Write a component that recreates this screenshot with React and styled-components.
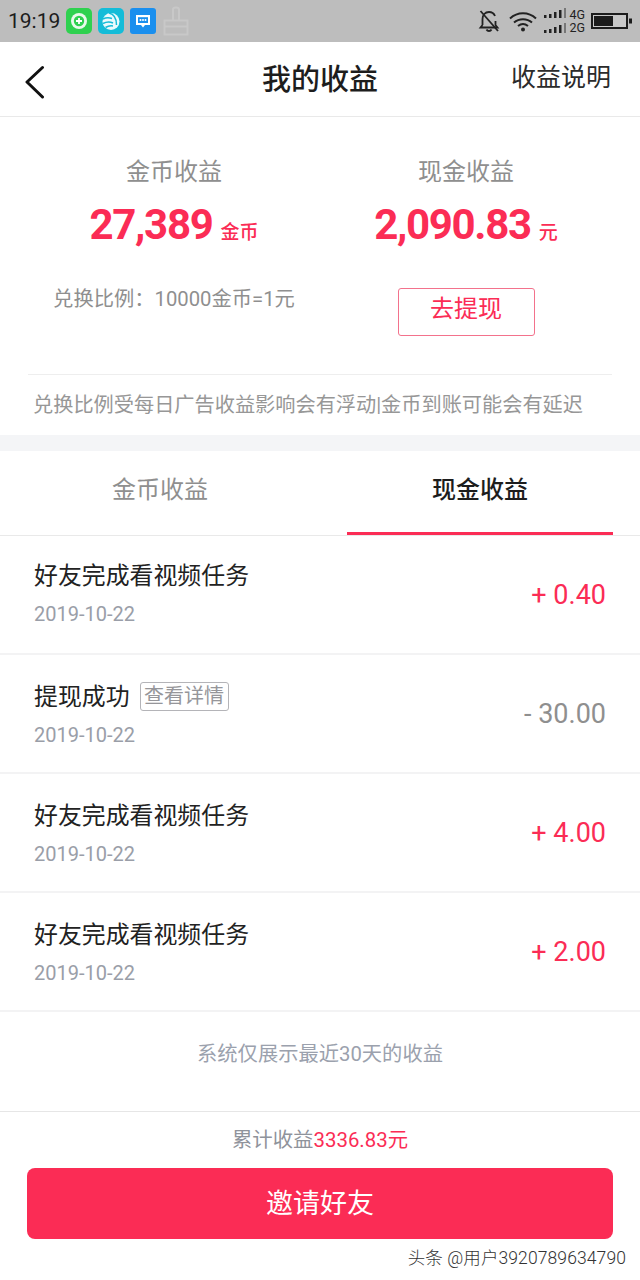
import React from "react";
import styled, { createGlobalStyle } from "styled-components";

const FONT = `Roboto, "Noto Sans CJK SC", sans-serif`;
const RED = "#fb2c55";

const Global = createGlobalStyle`
  html, body { margin: 0; padding: 0; background: #fff; }
  * { box-sizing: border-box; }
  body { font-family: ${FONT}; }
`;

const Page = styled.div`
  position: relative;
  width: 640px;
  height: 1280px;
  overflow: hidden;
  background: #fff;
`;

const StatusBar = styled.div`
  height: 42px;
  background: #bdbdbd;
  display: flex;
  align-items: center;
  padding: 0 8px 0 8px;
  color: #1c1c1c;
`;
const Time = styled.span`
  font-size: 21px;
  line-height: 42px;
  width: 58px;
  flex: none;
`;
const AppIcons = styled.div`
  display: flex;
  align-items: center;
  gap: 6px;
  flex: 1;
`;
const StatusRight = styled.div`
  display: flex;
  align-items: center;
`;
const NetLabels = styled.div`
  display: flex;
  flex-direction: column;
  font-size: 12.5px;
  line-height: 13px;
  color: #222;
  margin: 0 6px 0 3px;
`;

const Nav = styled.header`
  height: 75px;
  display: flex;
  align-items: center;
  justify-content: space-between;
  position: relative;
  padding: 5px 29px 0 24px;
  border-bottom: 1px solid #e9e9e9;
`;
const NavTitle = styled.h1`
  position: absolute;
  left: 0;
  right: 0;
  top: 18px;
  margin: 0;
  text-align: center;
  font-size: 29px;
  line-height: 40px;
  font-weight: 500;
  color: #1d1d1d;
`;
const NavLink = styled.span`
  font-size: 25px;
  line-height: 36px;
  color: #2b2b2b;
  margin-top: -8px;
`;

const Summary = styled.section`
  height: 318px;
  padding: 37px 28px 0;
  display: flex;
  flex-direction: column;
`;
const Columns = styled.div`
  display: grid;
  grid-template-columns: 292px 292px;
  height: 220px;
`;
const Column = styled.div`
  display: flex;
  flex-direction: column;
  align-items: center;
`;
const ColumnTitle = styled.div`
  font-size: 24px;
  line-height: 36px;
  color: #8f8f8f;
  height: 36px;
`;
const Amount = styled.div`
  display: flex;
  align-items: baseline;
  gap: 8px;
  margin-top: 8px;
  color: ${RED};
  height: 54px;
`;
const AmountValue = styled.span`
  font-size: 42px;
  font-weight: 700;
  line-height: 54px;
  letter-spacing: -1.3px;
`;
const AmountUnit = styled.span`
  font-size: 19px;
  font-weight: 500;
`;
const Rate = styled.div`
  font-size: 20.3px;
  line-height: 30px;
  color: #8f8f8f;
  margin-top: 32px;
  white-space: nowrap;
`;
const WithdrawButton = styled.button`
  width: 137px;
  height: 48px;
  margin-top: 36px;
  padding: 0 0 12px;
  border: 1px solid #f3728c;
  border-radius: 3px;
  background: #fff;
  color: ${RED};
  font-family: ${FONT};
  font-size: 24px;
`;
const Notice = styled.div`
  border-top: 1px solid #eeeeee;
  font-size: 20.2px;
  line-height: 60px;
  color: #979797;
  padding-left: 5px;
  white-space: nowrap;
`;

const Divider = styled.div`
  height: 16px;
  background: #f4f5f7;
`;

const Tabs = styled.nav`
  height: 85px;
  display: flex;
  justify-content: space-between;
  padding: 0 27px 0 27px;
  border-bottom: 1px solid #e9e9e9;
`;
const Tab = styled.div`
  width: 266px;
  height: 84px;
  display: flex;
  justify-content: center;
  padding-top: 21px;
  font-size: 24px;
  line-height: 36px;
  color: ${(p) => (p.$active ? "#1d1d1d" : "#8f8f8f")};
  font-weight: ${(p) => (p.$active ? 500 : 400)};
  border-bottom: 3px solid ${(p) => (p.$active ? RED : "transparent")};
`;

const Row = styled.div`
  height: 119px;
  padding: 0 34px 0 34px;
  display: flex;
  justify-content: space-between;
  align-items: center;
  border-bottom: 2px solid #f3f3f4;
`;
const RowMain = styled.div`
  display: flex;
  flex-direction: column;
  margin-top: ${(p) => (p.$lifted ? "-3px" : "0")};
`;
const RowTitle = styled.div`
  display: flex;
  align-items: center;
  gap: 10px;
  font-size: 23.9px;
  line-height: 36px;
  color: #222;
`;
const Tag = styled.span`
  width: 89px;
  height: 29px;
  border: 1px solid #b4b4b8;
  border-radius: 3px;
  font-size: 20px;
  line-height: 26px;
  text-align: center;
  color: #96969a;
`;
const RowDate = styled.div`
  font-size: 20px;
  line-height: 28px;
  color: #9a9ea8;
  margin-top: 6px;
`;
const RowAmount = styled.div`
  font-size: 27px;
  color: ${(p) => (p.$negative ? "#8f8f8f" : RED)};
`;

const ListNote = styled.div`
  height: 99px;
  padding-top: 26px;
  text-align: center;
  font-size: 20.3px;
  line-height: 32px;
  color: #9ba1ad;
`;

const Footer = styled.footer`
  border-top: 1px solid #e6e6e6;
  padding: 13px 27px 0;
`;
const Total = styled.div`
  text-align: center;
  font-size: 20.4px;
  line-height: 30px;
  color: #8f939b;
`;
const TotalValue = styled.span`
  color: ${RED};
`;
const InviteButton = styled.button`
  display: block;
  width: 586px;
  height: 71px;
  margin-top: 13px;
  padding: 0 0 5px;
  border: 0;
  border-radius: 8px;
  background: ${RED};
  color: #fff;
  font-family: ${FONT};
  font-size: 27px;
`;
const Watermark = styled.div`
  position: absolute;
  right: 14px;
  top: 1246px;
  font-size: 17.5px;
  line-height: 24px;
  color: #333;
  font-weight: 300;
  letter-spacing: 0.1px;
  text-shadow: 1px 1px 0 #fff;
  white-space: nowrap;
`;

const WeChatSafe = () => (
  <svg width="26" height="26" viewBox="0 0 26 26">
    <rect width="26" height="26" rx="5" fill="#2fd14f" />
    <circle cx="13" cy="13" r="8" fill="#e9f9ec" />
    <circle cx="13" cy="13" r="5.200" fill="#2fd14f" />
    <path d="M13 10v6M10 13h6" stroke="#fff" strokeWidth="1.800" />
  </svg>
);
const Ball = () => (
  <svg width="26" height="26" viewBox="0 0 26 26">
    <rect width="26" height="26" rx="5" fill="#14bcd8" />
    <circle cx="13" cy="13.500" r="8.500" fill="#eafafc" />
    <path d="M5 11c3-1.500 6-1.500 9-.5M5 15.500c3.500-2 7-2 10-.5M7.500 19.500c2.500-1.500 5-2 7.500-1.500M11 5c4.500 1 7.500 5 7.500 12" stroke="#14bcd8" strokeWidth="1.500" fill="none" />
  </svg>
);
const Msg = () => (
  <svg width="26" height="26" viewBox="0 0 26 26">
    <rect width="26" height="26" rx="3" fill="#1a8fee" />
    <path d="M6 7h14v10h-5l-2 2.500-2-2.500H6z" fill="#fff" />
    <rect x="8" y="9.200" width="10" height="5.800" fill="#1a8fee" />
    <circle cx="10.500" cy="12" r="1" fill="#fff" /><circle cx="13" cy="12" r="1" fill="#fff" /><circle cx="15.500" cy="12" r="1" fill="#fff" />
  </svg>
);
const Brush = () => (
  <svg width="28" height="30" viewBox="0 0 28 30">
    <path d="M11 14V3.500q0-2 3-2t3 2V14M2.500 14.500h23v6h-23zM2.500 20.500V28.500h23v-8" fill="none" stroke="#c8c8c8" strokeWidth="2" />
  </svg>
);
const BellOff = () => (
  <svg width="22" height="24" viewBox="0 0 22 24" style={{ marginRight: 9 }}>
    <path d="M4.500 16V10c0-4 2.500-7 6.500-7s5 1.500 6 4M17.500 12v4l2 2.500H2.500l2-2.500M8.500 20.500c1 2 4 2 5 0" fill="none" stroke="#222" strokeWidth="1.800" />
    <path d="M2.500 2l17.500 20" stroke="#222" strokeWidth="1.800" />
  </svg>
);
const Wifi = () => (
  <svg width="28" height="21" viewBox="0 0 28 21" style={{ marginRight: 7 }}>
    <path d="M1 7.500c7.500-7 18.500-7 26 0M5 11.500c5-4.500 13-4.500 18 0M9 15c3-2.500 7-2.500 10 0" fill="none" stroke="#222" strokeWidth="2" />
    <circle cx="14" cy="18.500" r="2" fill="#222" />
  </svg>
);
const Signal = () => (
  <svg width="22" height="26" viewBox="0 0 22 26">
    {[0, 15].map((y) => (
      <g key={y} fill="#222" transform={`translate(0 ${y})`}>
        <rect x="0" y="7" width="2.500" height="3" />
        <rect x="5" y="6" width="2.500" height="4" />
        <rect x="10" y="4" width="2.500" height="6" />
        <rect x="15" y="2" width="2.500" height="8" />
        <rect x="20" y="0" width="2" height="10" fill="#777" />
      </g>
    ))}
  </svg>
);
const Battery = () => (
  <svg width="41" height="16" viewBox="0 0 41 16">
    <rect x="1" y="1" width="35" height="14" fill="#c8c8c8" stroke="#1c1c1c" strokeWidth="2" />
    <rect x="3" y="3" width="19" height="10" fill="#1c1c1c" />
    <rect x="38" y="5.500" width="3" height="5" fill="#1c1c1c" />
  </svg>
);
const Back = () => (
  <svg width="22" height="34" viewBox="0 0 22 34" style={{ display: "block" }}>
    <path d="M18.500 2.500L3 17l15.500 15" fill="none" stroke="#111" strokeWidth="3" strokeLinecap="round" strokeLinejoin="round" />
  </svg>
);

const rows = [
  { title: "好友完成看视频任务", amount: "+ 0.40", lifted: true },
  { title: "提现成功", amount: "- 30.00", negative: true, tag: "查看详情" },
  { title: "好友完成看视频任务", amount: "+ 4.00" },
  { title: "好友完成看视频任务", amount: "+ 2.00" },
];

export default function App() {
  return (
    <Page>
      <Global />
      <StatusBar>
        <Time>19:19</Time>
        <AppIcons>
          <WeChatSafe />
          <Ball />
          <Msg />
          <Brush />
        </AppIcons>
        <StatusRight>
          <BellOff />
          <Wifi />
          <Signal />
          <NetLabels>
            <span>4G</span>
            <span>2G</span>
          </NetLabels>
          <Battery />
        </StatusRight>
      </StatusBar>
      <Nav>
        <Back />
        <NavTitle>我的收益</NavTitle>
        <NavLink>收益说明</NavLink>
      </Nav>
      <Summary>
        <Columns>
          <Column>
            <ColumnTitle>金币收益</ColumnTitle>
            <Amount>
              <AmountValue>27,389</AmountValue>
              <AmountUnit>金币</AmountUnit>
            </Amount>
            <Rate>兑换比例：10000金币=1元</Rate>
          </Column>
          <Column>
            <ColumnTitle>现金收益</ColumnTitle>
            <Amount>
              <AmountValue>2,090.83</AmountValue>
              <AmountUnit>元</AmountUnit>
            </Amount>
            <WithdrawButton>去提现</WithdrawButton>
          </Column>
        </Columns>
        <Notice>兑换比例受每日广告收益影响会有浮动|金币到账可能会有延迟</Notice>
      </Summary>
      <Divider />
      <Tabs>
        <Tab>金币收益</Tab>
        <Tab $active>现金收益</Tab>
      </Tabs>
      {rows.map((r, i) => (
        <Row key={i}>
          <RowMain $lifted={r.lifted}>
            <RowTitle>
              {r.title}
              {r.tag && <Tag>{r.tag}</Tag>}
            </RowTitle>
            <RowDate>2019-10-22</RowDate>
          </RowMain>
          <RowAmount $negative={r.negative}>{r.amount}</RowAmount>
        </Row>
      ))}
      <ListNote>系统仅展示最近30天的收益</ListNote>
      <Footer>
        <Total>
          累计收益<TotalValue>3336.83元</TotalValue>
        </Total>
        <InviteButton>邀请好友</InviteButton>
      </Footer>
      <Watermark>头条 @用户3920789634790</Watermark>
    </Page>
  );
}
